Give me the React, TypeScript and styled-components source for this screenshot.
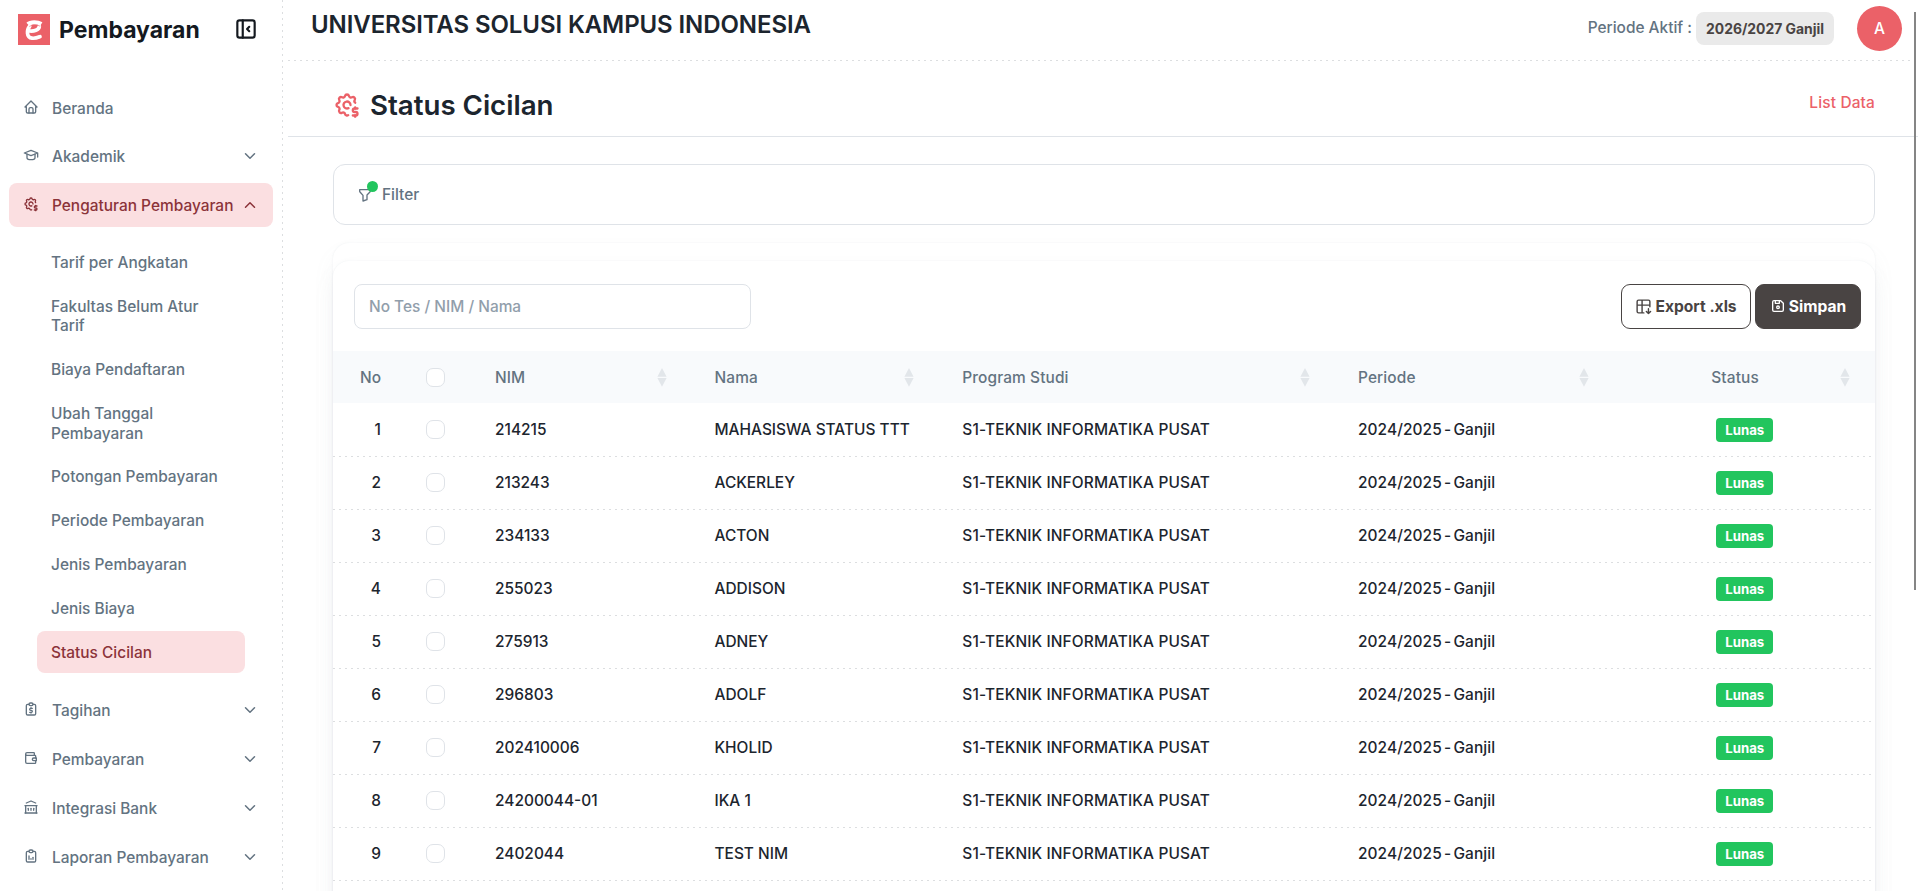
import React from "react";
import styled, { createGlobalStyle, css } from "styled-components";
import {
  TbSettingsDollar, TbHome, TbSchool, TbLayoutSidebarLeftCollapse, TbFilter,
  TbReportMoney, TbWallet, TbBuildingBank, TbReportAnalytics, TbDeviceFloppy,
  TbChevronDown, TbChevronUp,
} from "react-icons/tb";

const color = {
  ink: "#1c252e",
  slate: "#637381",
  primary: "#eb6168",
  primarySoft: "#fbdfe1",
  primaryDark: "#8b3339",
  dark: "#494443",
  line: "#dfe3e8",
  dash: "#dcdee0",
  green: "#22c55e",
};

const GlobalStyle = createGlobalStyle`
  * { box-sizing: border-box; }
  body {
    margin: 0;
    background: #fff;
    overflow: hidden;
    font-family: Inter, "Liberation Sans", sans-serif;
    font-size: 15.45px;
    font-weight: 450;
    color: ${color.ink};
  }
`;

const dashedBottom = css`
  background-image: repeating-linear-gradient(90deg, ${color.dash} 0 2px, transparent 2px 6px);
  background-size: 100% 1px;
  background-position: left bottom;
  background-repeat: no-repeat;
`;

const Shell = styled.div`
  display: flex;
  height: 891px;
  overflow: hidden;
  position: relative;
`;

const Sidebar = styled.aside`
  width: 283px;
  flex: none;
  background: repeating-linear-gradient(180deg, ${color.dash} 0 2px, transparent 2px 6px) right top / 1px 100% no-repeat;
`;

const Brand = styled.div`
  display: flex;
  align-items: center;
  height: 58px;
  padding: 0 24px 0 18px;
`;

const BrandName = styled.span`
  flex: 1;
  margin-left: 9px;
  padding-top: 1px;
  font-size: 23px;
  font-weight: 700;
  color: #14191f;
`;

const CollapseButton = styled.span`
  display: flex;
  color: #14191f;
`;

const Nav = styled.nav`
  padding: 28px 10px 0 9px;
`;

const NavItem = styled.div<{ $active?: boolean; $gap?: number }>`
  display: flex;
  align-items: center;
  height: 44px;
  margin-bottom: ${p => p.$gap ?? 5}px;
  padding: 0 14px;
  border-radius: 8px;
  color: ${p => (p.$active ? color.primaryDark : color.slate)};
  background: ${p => (p.$active ? color.primarySoft : "transparent")};
  white-space: nowrap;
`;

const NavIcon = styled.span`
  display: flex;
  width: 29px;
  padding-bottom: 2px;
`;

const NavLabel = styled.span`
  flex: 1;
  padding-top: 1px;
`;

const SubNav = styled.div`
  display: flex;
  flex-direction: column;
  gap: 2.1px;
  width: 208px;
  margin-left: 28px;
  padding: 13.8px 0 15.4px;
`;

const SubItem = styled.div<{ $active?: boolean }>`
  padding: 12.15px 14px 10.15px;
  border-radius: 8px;
  line-height: 19.5px;
  color: ${p => (p.$active ? color.primaryDark : color.slate)};
  background: ${p => (p.$active ? color.primarySoft : "transparent")};
`;

const Main = styled.main`
  flex: 1;
  min-width: 0;
  margin-left: 5px;
  display: flex;
  flex-direction: column;
`;

const TopBar = styled.header`
  display: flex;
  align-items: flex-start;
  height: 61px;
  flex: none;
  padding: 0 16px 0 23px;
  ${dashedBottom}
`;

const Campus = styled.h1`
  flex: 1;
  margin: 10px 0 0;
  font-size: 24px;
  line-height: 29px;
  font-weight: 560;
  letter-spacing: -0.09px;
`;

const Period = styled.div`
  margin: 18px 4px 0 0;
  line-height: 19px;
  color: ${color.slate};
`;

const PeriodBadge = styled.div`
  width: 138px;
  height: 33px;
  margin-top: 12px;
  border-radius: 8px;
  background: #eaeaea;
  color: ${color.dark};
  font-size: 13.9px;
  font-weight: 700;
  line-height: 34px;
  text-align: center;
`;

const Avatar = styled.div`
  width: 45px;
  height: 45px;
  margin: 6px 0 0 23px;
  border-radius: 50%;
  background: ${color.primary};
  color: #fff;
  font-size: 15.5px;
  font-weight: 500;
  line-height: 45px;
  text-align: center;
`;

const PageHead = styled.section`
  display: flex;
  align-items: center;
  height: 76px;
  flex: none;
  padding: 12px 43px 0 45px;
  border-bottom: 1px solid ${color.line};
`;

const PageIcon = styled.span`
  display: flex;
  width: 37px;
  color: ${color.primary};
`;

const PageTitle = styled.h2`
  flex: 1;
  margin: 0;
  font-size: 27.7px;
  font-weight: 560;
  letter-spacing: -0.03px;
`;

const ListLink = styled.a`
  padding-bottom: 4px;
  letter-spacing: 0.15px;
  color: ${color.primary};
`;

const Content = styled.div`
  flex: 1;
  display: flex;
  flex-direction: column;
  padding: 27px 43px 0 45px;
`;

const FilterCard = styled.section`
  display: flex;
  align-items: center;
  height: 61px;
  padding: 0 23px;
  border: 1px solid ${color.line};
  border-radius: 12px;
  color: ${color.slate};
`;

const FilterIcon = styled.span`
  position: relative;
  display: flex;
  width: 25px;
`;

const Dot = styled.i`
  position: absolute;
  left: 10px;
  top: -6px;
  width: 11px;
  height: 11px;
  border-radius: 50%;
  background: ${color.green};
`;

const shadow = css`
  box-shadow: 0 0 2px rgba(145, 158, 171, 0.16), 0 12px 24px -4px rgba(145, 158, 171, 0.1);
`;

const OuterCard = styled.section`
  margin-top: 18px;
  padding-top: 18px;
  border-radius: 16px;
  ${shadow}
`;

const DataCard = styled.section`
  height: 720px;
  border-radius: 16px;
  background: #fff;
  ${shadow}
`;

const Toolbar = styled.div`
  display: flex;
  align-items: center;
  height: 90px;
  padding: 1px 14px 0 21px;
  gap: 4px;
`;

const Search = styled.input`
  width: 397px;
  height: 45px;
  margin-right: auto;
  padding: 0 14px;
  border: 1px solid ${color.line};
  border-radius: 8px;
  outline: none;
  font: inherit;
  &::placeholder { color: #919eab; opacity: 1; }
`;

const Button = styled.button<{ $solid?: boolean; $width: number }>`
  display: flex;
  align-items: center;
  justify-content: center;
  gap: 3px;
  width: ${p => p.$width}px;
  height: 45px;
  padding: 0;
  border: 1px solid ${color.dark};
  border-radius: 9px;
  background: ${p => (p.$solid ? color.dark : "#fff")};
  color: ${p => (p.$solid ? "#fff" : color.dark)};
  font: inherit;
  font-size: 15.6px;
  font-weight: 700;
  svg { margin-bottom: 1px; }
`;

const Row = styled.div<{ $head?: boolean }>`
  display: grid;
  grid-template-columns: 93px 69px 219.5px 247.8px 395.7px 353.3px 1fr;
  align-items: center;
  height: 53px;
  padding-bottom: 2px;
  ${p => p.$head ? css`
    height: 52px;
    margin-bottom: 1px;
    padding-bottom: 0;
    background: #f8fafc;
    color: ${color.slate};
  ` : dashedBottom}
`;

const NumberCell = styled.span`
  padding-right: 45px;
  text-align: right;
`;

const Cell = styled.span<{ $spacing?: number; $words?: number }>`
  letter-spacing: ${p => p.$spacing ?? 0}px;
  word-spacing: ${p => p.$words ?? 0}px;
  white-space: pre;
`;

const HeadCell = styled.span<{ $right?: number }>`
  display: flex;
  align-items: center;
  justify-content: space-between;
  padding-right: ${p => p.$right ?? 48}px;
  letter-spacing: 0.1px;
`;

const Check = styled.span`
  width: 19px;
  height: 19px;
  border: 1px solid ${color.line};
  border-radius: 7px;
  background: #fff;
`;

const StatusBadge = styled.span`
  width: 57px;
  height: 24px;
  margin: 1px 0 0 5px;
  border-radius: 4px;
  background: ${color.green};
  color: #fff;
  font-size: 13.2px;
  font-weight: 700;
  line-height: 24.5px;
  text-align: center;
`;

const ScrollThumb = styled.div`
  position: absolute;
  top: 12px;
  right: 2px;
  width: 2px;
  height: 578px;
  background: #858585;
`;

const Logo = () => (
  <svg width="32" height="31" viewBox="0 0 32 31">
    <rect width="32" height="31" fill={color.primary} />
    <path d="M10.5 16.8C16 17.8 21.2 15.6 21.3 12.4M11.8 12C8.6 16 8.2 23.6 14 24.2C17.4 24.6 19.6 23.6 22 22.6" fill="none" stroke="#fff" strokeWidth="3.7" strokeLinecap="round" />
    <path d="M8.4 8.8C11 5.4 20 5.3 24.4 8.2L22.4 11.6C18 9.8 14.4 10.2 11.2 11.8Z" fill="#fff" />
    <path d="M11.3 12.5C15 10.4 19 10.4 22.2 12.3" fill="none" stroke={color.primary} strokeWidth=".6" />
  </svg>
);

const TableDownIcon = () => (
  <svg width="17" height="17" viewBox="0 0 24 24" fill="none" stroke="currentColor" strokeWidth="2" strokeLinecap="round" strokeLinejoin="round">
    <path d="M12.5 21h-7.5a2 2 0 0 1 -2 -2v-14a2 2 0 0 1 2 -2h14a2 2 0 0 1 2 2v7.5M3 10h18M10 3v18M19 15v7M22 19l-3 3l-3 -3" />
  </svg>
);

const SortIcon = () => (
  <svg width="10" height="20" viewBox="0 0 10 20" fill="#e2e6ea">
    <path d="M5 1L9.6 9.8H.4ZM.4 11H9.6L5 19.8Z" />
  </svg>
);

const subMenu = [
  "Tarif per Angkatan", "Fakultas Belum Atur Tarif", "Biaya Pendaftaran", "Ubah Tanggal Pembayaran",
  "Potongan Pembayaran", "Periode Pembayaran", "Jenis Pembayaran", "Jenis Biaya", "Status Cicilan",
];

const lowerMenu = [
  { label: "Tagihan", Icon: TbReportMoney },
  { label: "Pembayaran", Icon: TbWallet },
  { label: "Integrasi Bank", Icon: TbBuildingBank },
  { label: "Laporan Pembayaran", Icon: TbReportAnalytics },
];

const students = [
  ["214215", "MAHASISWA STATUS TTT"], ["213243", "ACKERLEY"], ["234133", "ACTON"],
  ["255023", "ADDISON"], ["275913", "ADNEY"], ["296803", "ADOLF"],
  ["202410006", "KHOLID"], ["24200044-01", "IKA 1"], ["2402044", "TEST NIM"],
];

export default function App() {
  return (
    <Shell>
      <GlobalStyle />
      <Sidebar>
        <Brand>
          <Logo />
          <BrandName>Pembayaran</BrandName>
          <CollapseButton><TbLayoutSidebarLeftCollapse size={26} /></CollapseButton>
        </Brand>
        <Nav>
          <NavItem $gap={4}><NavIcon><TbHome size={16} /></NavIcon><NavLabel>Beranda</NavLabel></NavItem>
          <NavItem><NavIcon><TbSchool size={16} /></NavIcon><NavLabel>Akademik</NavLabel><TbChevronDown size={18} /></NavItem>
          <NavItem $active $gap={0}>
            <NavIcon><TbSettingsDollar size={16} /></NavIcon><NavLabel>Pengaturan Pembayaran</NavLabel><TbChevronUp size={18} />
          </NavItem>
          <SubNav>
            {subMenu.map(label => <SubItem key={label} $active={label === "Status Cicilan"}>{label}</SubItem>)}
          </SubNav>
          {lowerMenu.map(({ label, Icon }) => (
            <NavItem key={label}><NavIcon><Icon size={16} /></NavIcon><NavLabel>{label}</NavLabel><TbChevronDown size={18} /></NavItem>
          ))}
        </Nav>
      </Sidebar>
      <Main>
        <TopBar>
          <Campus>UNIVERSITAS SOLUSI KAMPUS INDONESIA</Campus>
          <Period>Periode Aktif :</Period>
          <PeriodBadge>2026/2027 Ganjil</PeriodBadge>
          <Avatar>A</Avatar>
        </TopBar>
        <PageHead>
          <PageIcon><TbSettingsDollar size={28} /></PageIcon>
          <PageTitle>Status Cicilan</PageTitle>
          <ListLink>List Data</ListLink>
        </PageHead>
        <Content>
          <FilterCard>
            <FilterIcon><TbFilter size={16} /><Dot /></FilterIcon>
            Filter
          </FilterCard>
          <OuterCard>
            <DataCard>
              <Toolbar>
                <Search placeholder="No Tes / NIM / Nama" />
                <Button $width={130}><TableDownIcon />Export .xls</Button>
                <Button $width={106} $solid><TbDeviceFloppy size={16} />Simpan</Button>
              </Toolbar>
              <Row $head>
                <NumberCell>No</NumberCell>
                <Check />
                <HeadCell>NIM<SortIcon /></HeadCell>
                <HeadCell>Nama<SortIcon /></HeadCell>
                <HeadCell>Program Studi<SortIcon /></HeadCell>
                <HeadCell $right={122}>Periode<SortIcon /></HeadCell>
                <HeadCell $right={25}>Status<SortIcon /></HeadCell>
              </Row>
              {students.map(([nim, name], i) => (
                <Row key={nim}>
                  <NumberCell>{i + 1}</NumberCell>
                  <Check />
                  <Cell>{nim}</Cell>
                  <Cell>{name}</Cell>
                  <Cell $spacing={0.12}>S1-TEKNIK INFORMATIKA PUSAT</Cell>
                  <Cell $spacing={0.08} $words={-2}>2024/2025 - Ganjil</Cell>
                  <StatusBadge>Lunas</StatusBadge>
                </Row>
              ))}
            </DataCard>
          </OuterCard>
        </Content>
      </Main>
      <ScrollThumb />
    </Shell>
  );
}
